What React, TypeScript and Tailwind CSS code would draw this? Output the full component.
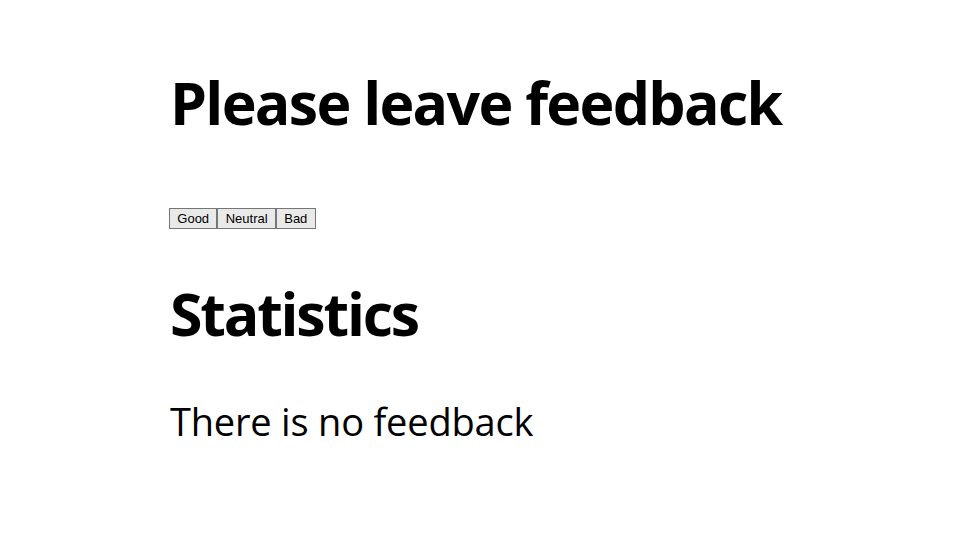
export default function App() {
  const options = ['Good', 'Neutral', 'Bad'];

  return (
    <div className="flex min-h-screen flex-col items-start bg-white pl-[170px] pt-[73px] font-['Open_Sans',sans-serif] text-black">
      <h1 className="text-[59px] font-bold leading-none tracking-[-1.7px]">Please leave feedback</h1>

      {/* buttons */}
      <div className="-ml-px mt-[76px] flex">
        {options.map((o) => (
          <button
            key={o}
            type="button"
            className="h-[21px] border border-[#767676] bg-[#e9e9e9] px-[7.3px] font-['Liberation_Sans',Arial,sans-serif] text-[13px] leading-none text-black"
          >
            {o}
          </button>
        ))}
      </div>

      <h2 className="mt-[55px] text-[59px] font-bold leading-none tracking-[-2.2px]">Statistics</h2>
      <p className="mt-[59px] text-[38px] leading-none tracking-[-0.2px]">There is no feedback</p>
    </div>
  );
}
